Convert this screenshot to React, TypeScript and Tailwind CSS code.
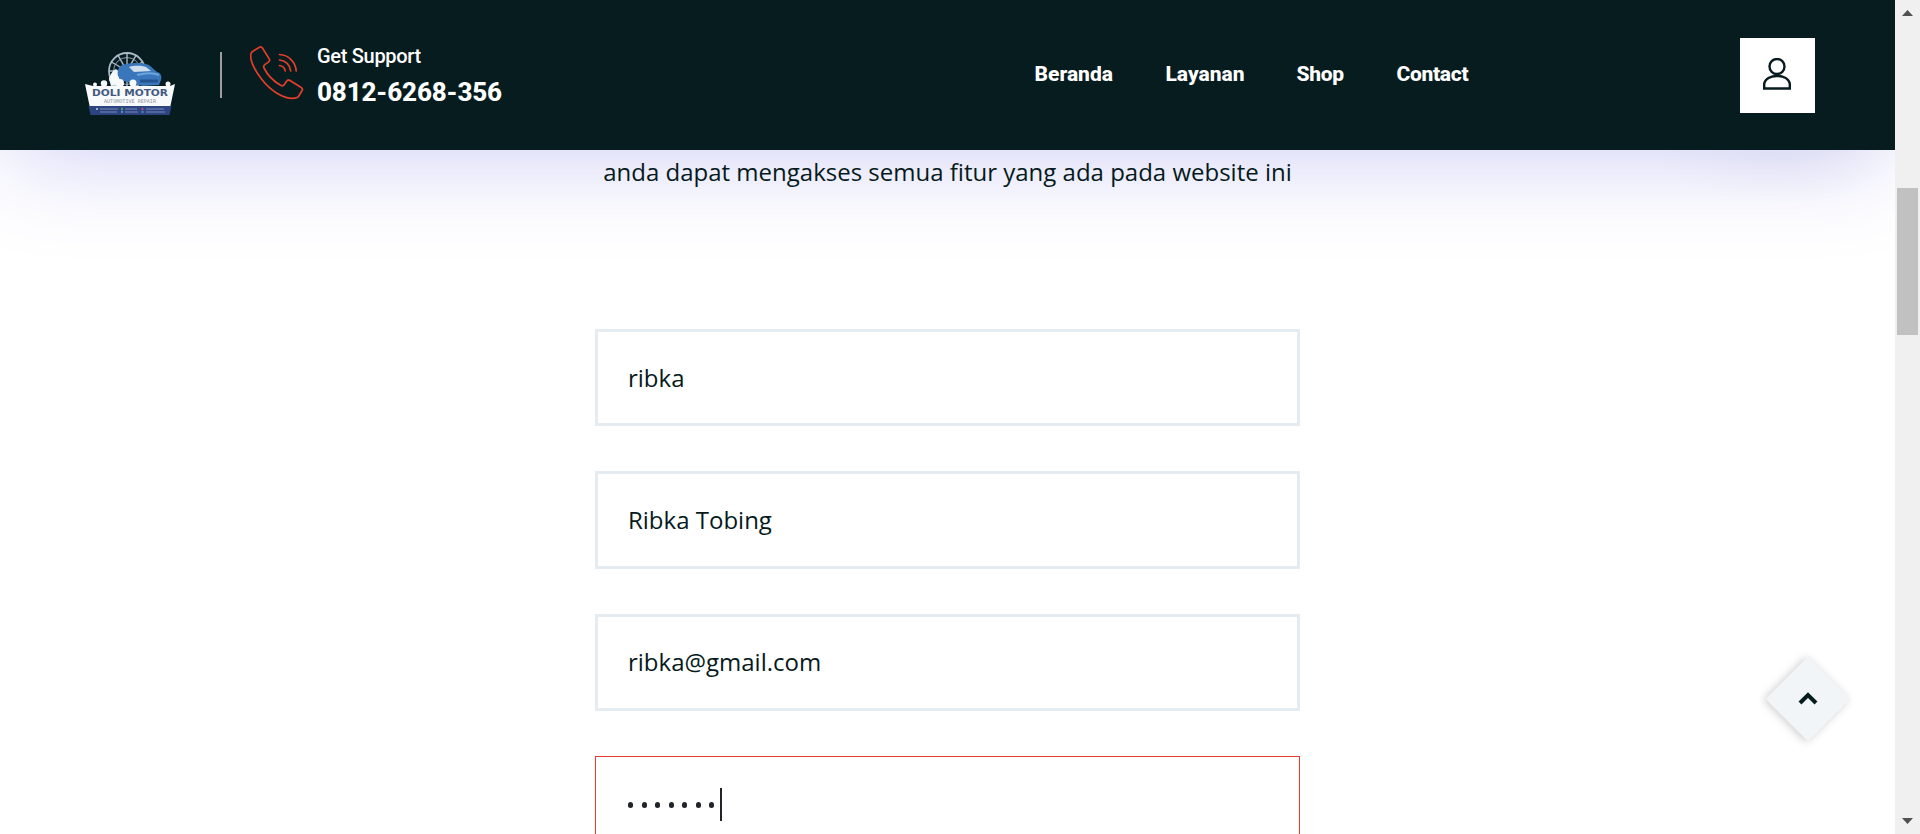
import React from "react";

const SPOKES = [0, 30, 60, 90, 120, 150];

function Logo() {
  return (
    <svg className="h-[70px] w-[94px] shrink-0" viewBox="0 0 94 70">
      <g fill="none" stroke="#a9bac9">
        <circle cx="43" cy="21" r="18" strokeWidth="1.8" />
        <circle cx="43" cy="21" r="13.500" strokeWidth=".8" />
        {SPOKES.map((a) => (
          <path key={a} d="M43 3V39" strokeWidth="1.4" transform={`rotate(${a} 43 21)`} />
        ))}
      </g>
      <path d="M27 36c-3-8 0-15 5-17l4 4 4 12z" fill="#f2f5f8" />
      <path d="M34 20c1-4 4-5 8-6 8-2 18-1 23 1l8 7c4 1 5 4 4 8l-2 5-16 1-16-4-6-2c-3-2-4-6-3-10z" fill="#3a76bb" />
      <path d="M45 17c7-2 13-1 17 0l5 4-17 1z" fill="#cfdeeb" />
      <path d="M53 25c8-2 17-2 22 0" stroke="#6ea5dc" strokeWidth="2" fill="none" />
      <path d="M56 31h18" stroke="#24538f" strokeWidth="3" />
      <g fill="#f7f9fb">
        <circle cx="49" cy="33" r="3.5" />
        <circle cx="30" cy="29" r="5" />
        <circle cx="36" cy="33" r="4" />
        <circle cx="20" cy="33.5" r="3.2" />
        <circle cx="11" cy="34.5" r="2" />
        <circle cx="84" cy="34" r="2.5" />
        <path d="M1 34l8 2h77l5-2-5 24H6z" />
      </g>
      <path d="M4.500 56h83l-2 9H6.500z" fill="#2d4480" />
      <text x="46" y="45.500" textAnchor="middle" textLength="76" lengthAdjust="spacingAndGlyphs" fill="#43587f" fontSize="8.500" fontWeight="700" fontFamily="DejaVu Sans, sans-serif">DOLI MOTOR</text>
      <text x="46" y="53" textAnchor="middle" textLength="52" lengthAdjust="spacingAndGlyphs" fill="#8a93a0" fontSize="5" fontFamily="DejaVu Sans Mono, monospace">AUTOMOTIVE REPAIR</text>
      <g opacity=".75" strokeWidth="1">
        <path d="M12 59h2" stroke="#fff" strokeWidth="1.5" />
        <path d="M16 59h18M16 62h17M41 59h12M41 62h13M62 59h18M62 62h19" stroke="#8fa1c8" />
        <path d="M37 59h2" stroke="#53b96a" strokeWidth="2.400" />
        <path d="M37 62h2" stroke="#5aa6df" strokeWidth="2" />
        <path d="M57.500 59h2" stroke="#d2567c" strokeWidth="2.400" />
        <path d="M57.500 62h2" stroke="#4aa3df" strokeWidth="2" />
      </g>
    </svg>
  );
}

function PhoneIcon() {
  return (
    <svg className="h-[54px] w-[54px] shrink-0" viewBox="0 0 54 54" fill="none" stroke="#e23e2a" strokeWidth="1.7" strokeLinecap="round" strokeLinejoin="round">
      <path d="M2.500 5.500L9 1.500c1.500-.9 2.800-.5 3.600.8l6.600 10.600c.8 1.300.5 2.300-.8 3.200l-3.600 2.500c-1.200.9-1.500 1.900-.8 3.400 3.400 6.800 9.800 13.400 16.600 17.300 1.500.9 2.800.6 3.700-.8l2.300-3.300c.9-1.300 2.100-1.500 3.400-.7L51.200 41.500c1.300.8 1.600 1.900.8 3.300l-3.200 5.200c-.8 1.300-2 2-3.800 2.200C33 53.500 20 44 11.500 33 3.500 22.500 0 15 .8 8.500c.2-1.500.7-2.300 1.700-3z" />
      <path d="M29.500 19.500c3 .4 5.300 2.600 5.700 5.500" />
      <path d="M29.500 14c6 .4 10.700 5 11.200 11" />
      <path d="M29.500 8.500c9 .4 16.200 7.500 16.700 16.500" />
    </svg>
  );
}

const nav = [
  { label: "Beranda", box: "w-[131px]" },
  { label: "Layanan", box: "w-[131px]" },
  { label: "Shop", box: "w-[100px] tracking-[-0.3px]" },
  { label: "Contact", box: "w-[80px] tracking-[-0.3px]" },
];

const fields = ["ribka", "Ribka Tobing", "ribka@gmail.com"];

export default function App() {
  return (
    <div className="flex h-[834px] w-[1920px] overflow-hidden bg-white font-['Open_Sans',sans-serif] text-[#061a1c]">
      <div className="relative flex h-full w-[1895px] flex-col overflow-hidden">
        <header className="flex h-[150px] w-full shrink-0 bg-[#071c1f] pl-[84px] font-[Roboto,sans-serif] text-white shadow-[0_22px_90px_-8px_rgba(90,90,225,0.26)]">
          <div className="flex w-[950.5px] shrink-0">
            <div className="pt-[50px]"><Logo /></div>
            <div className="mt-[52px] ml-[42px] h-[46px] w-[2px] bg-[#a09d9c]" />
            <div className="mt-[46px] ml-[28px]"><PhoneIcon /></div>
            <div className="ml-[13px] pt-[44px]">
              <div className="text-[20px] leading-6 font-medium tracking-[-0.3px] whitespace-nowrap">Get Support</div>
              <div className="mt-[9px] text-[26px] leading-[30px] font-extrabold tracking-[-0.15px] whitespace-nowrap">0812-6268-356</div>
            </div>
          </div>
          <nav className="flex w-[705.5px] shrink-0 pt-[62px] text-[21px] leading-[25px] font-extrabold">
            {nav.map((n) => (
              <a key={n.label} className={n.box}>{n.label}</a>
            ))}
          </nav>
          <button className="mt-[38px] flex h-[75px] w-[75px] justify-center bg-white pt-[20px] pr-[1px]">
            <svg className="h-[32px] w-[28px]" viewBox="0 0 28 32" fill="none" stroke="#071c1f" strokeWidth="2.400">
              <circle cx="14" cy="8.500" r="7.500" />
              <path d="M1.200 30.500v-5C2.500 20.500 8 18 14 18s11.500 2.500 12.800 7.500v5z" />
            </svg>
          </button>
        </header>

        <main className="mx-auto flex w-[705px] flex-col">
          <p className="relative pt-[4px] text-center text-[24px] leading-9 whitespace-nowrap">anda dapat mengakses semua fitur yang ada pada website ini</p>
          <form className="mt-[139px] flex flex-col">
            {fields.map((f) => (
              <div key={f} className="mb-[45px] flex h-[97.4px] items-center border-[3px] border-[#e4ebf1] bg-white px-[30px] text-[24px]">{f}</div>
            ))}
            <div className="flex h-[97px] items-center border border-[#e23e2a] bg-white px-[32px]">
              <div className="flex gap-[8.500px]">
                {[0, 1, 2, 3, 4, 5, 6].map((i) => (
                  <span key={i} className="h-[6px] w-[5px] rounded-full bg-[#212529]" />
                ))}
              </div>
              <span className="ml-[6px] h-[33px] w-[2px] bg-[#212529]" />
            </div>
          </form>
        </main>

        <div className="absolute top-[150px] left-[1640px] h-[60px] w-[280px] bg-[radial-gradient(ellipse_at_50%_0%,rgba(80,80,130,0.045),transparent_65%)]" />

        <button className="absolute top-[669px] left-[1778px] flex h-[60px] w-[60px] rotate-45 items-center justify-center bg-[#f1f5f7] shadow-[-1px_2px_8px_rgba(0,0,0,0.2)]">
          <svg className="h-[20px] w-[20px] -rotate-45" viewBox="0 0 20 20" fill="none" stroke="#071c1f" strokeWidth="4">
            <path d="M2 14l8-8 8 8" />
          </svg>
        </button>
      </div>
      <div className="flex w-[25px] flex-col items-center bg-[#f0f0f0]">
        <svg className="mt-[10px] h-[6px] w-[11px]" viewBox="0 0 11 6"><path d="M0 6L5.500 0 11 6z" fill="#505050" /></svg>
        <div className="mt-[172px] h-[147px] w-[21px] bg-[#c1c1c1]" />
        <svg className="mt-auto mb-[10px] h-[6px] w-[11px]" viewBox="0 0 11 6"><path d="M0 0L5.500 6 11 0z" fill="#505050" /></svg>
      </div>
    </div>
  );
}
